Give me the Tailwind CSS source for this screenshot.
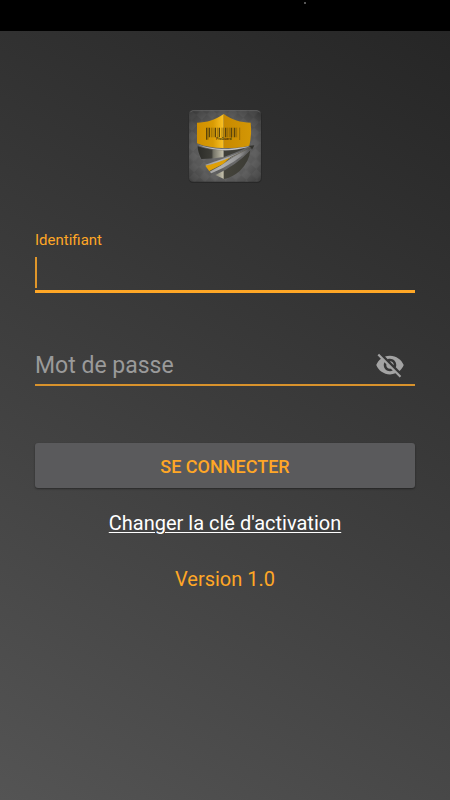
<!DOCTYPE html>
<html lang="fr">

<head>
    <meta charset="UTF-8">
    <meta name="viewport" content="width=device-width, initial-scale=1.0">
    <title>Connexion</title>
    <script src="https://cdn.jsdelivr.net/npm/@tailwindcss/browser@4"></script>
</head>

<body class="font-[Roboto,sans-serif] bg-black text-[#ffa726]">
    <div class="min-h-screen flex flex-col">
        <!-- Status bar -->
        <header class="relative h-[31px] bg-black">
            <span class="absolute left-[304px] top-[2px] size-[2px] bg-[#555555]"></span>
        </header>
        <main class="flex flex-1 flex-col items-center bg-linear-30 from-[#545454] to-[#262626] px-[35px] pt-[78px]">
            <!-- Logo -->
            <svg class="size-[74px]" viewBox="24 26 222 222" role="img" aria-label="Logo">
                <defs>
                    <pattern id="weave" width="44" height="44" patternUnits="userSpaceOnUse"
                        patternTransform="rotate(42)">
                        <rect width="22" height="22" fill="#fff" opacity=".04" />
                        <rect x="22" y="22" width="22" height="22" fill="#fff" opacity=".04" />
                    </pattern>
                    <radialGradient id="tile" cx=".5" cy=".55" r=".72">
                        <stop offset="0" stop-color="#707070" />
                        <stop offset=".6" stop-color="#585858" />
                        <stop offset="1" stop-color="#363636" />
                    </radialGradient>
                    <linearGradient id="gold-left">
                        <stop offset="0" stop-color="#cf8f00" />
                        <stop offset=".6" stop-color="#d99b04" />
                        <stop offset="1" stop-color="#fcc325" />
                    </linearGradient>
                    <linearGradient id="gold-right">
                        <stop offset="0" stop-color="#c88900" />
                        <stop offset="1" stop-color="#d39705" />
                    </linearGradient>
                    <linearGradient id="steel" gradientUnits="userSpaceOnUse" x1="50" y1="0" x2="220" y2="0">
                        <stop offset="0" stop-color="#2b2b27" />
                        <stop offset=".26" stop-color="#3d3d37" />
                        <stop offset=".3" stop-color="#77766a" />
                        <stop offset=".47" stop-color="#c4c0ab" />
                        <stop offset=".48" stop-color="#45443b" />
                        <stop offset="1" stop-color="#3a3a34" />
                    </linearGradient>
                    <linearGradient id="silver" gradientUnits="userSpaceOnUse" x1="50" y1="0" x2="220" y2="0">
                        <stop offset="0" stop-color="#8a8a8a" />
                        <stop offset=".4" stop-color="#b4b4b4" />
                        <stop offset=".75" stop-color="#949494" />
                        <stop offset="1" stop-color="#3c3c3c" />
                    </linearGradient>
                </defs>
                <rect x="26" y="31" width="219" height="217" rx="13" fill="#222" opacity=".6" />
                <rect x="27" y="29" width="216" height="215" rx="12" fill="url(#tile)" />
                <rect x="27" y="29" width="216" height="215" rx="12" fill="url(#weave)" />
                <path d="M31 36q3-5 8-5h192q5 0 8 5" fill="none" stroke="#6c6c6c" stroke-width="2" />
                <!-- Shield top -->
                <path d="M131 41C107 58 80 67 51 67V129C75 139 103 143 131 143Z" fill="url(#gold-left)" />
                <path d="M131 41C155 58 182 67 212 67Q216 102 208 136C184 142 157 143 131 143Z"
                    fill="url(#gold-right)" />
                <!-- Barcode -->
                <path d="M80 82V118M88 82V111M106 82V111M118 82V111M137 82V111M154 82V111M164 82V111" stroke="#5c450a"
                    stroke-width="4" />
                <path d="M84 82V118M94 82V111M99 82V111M112 82V111M126 82V111M131 82V111M143 82V111M148 82V111M159 82V111M170 82V111M179 82V119"
                    stroke="#7d5d0a" stroke-width="2" />
                <text x="131" y="120" font-size="11" font-weight="700" fill="#4c3908" text-anchor="middle">ProGuard</text>
                <!-- Shield bottom -->
                <path d="M53 138Q92 151 131 150L131 170Q94 176 64 176Q53 155 53 138Z" fill="url(#steel)" />
                <path d="M132 151Q165 151 196 144Q165 158 132 170Z" fill="#3e3e38" />
                <path d="M218 136Q151 147 126 146Q87 145 50 132Q86 149 137 150Q175 148 218 136Z" fill="#c4c4c4" />
                <path d="M222 137Q165 165 76 193L80 198Q155 178 222 137Z" fill="url(#silver)" />
                <path d="M76 196Q108 189 150 172L130 192L88 213Z" fill="#dfa006" />
                <path d="M216 140Q184 157 150 172L130 192L88 213" fill="none" stroke="#55503c" stroke-width="2" />
                <path d="M222 137Q180 158 150 177Q120 200 89 214L94 219Q160 193 222 137Z" fill="url(#silver)" />
                <path d="M211 150Q208 184 180 211Q157 231 132 236L106 224Q166 198 211 150Z" fill="url(#steel)" />
                <path d="M204 137L223 135L216 148L212 141Z" fill="#33332e" />
            </svg>

            <!-- Form -->
            <form action="#" class="w-full flex flex-col pt-[48px]">
                <!-- Identifiant -->
                <label for="login" class="text-[15px] leading-[18px]">Identifiant</label>
                <div class="relative mt-[7px]">
                    <input type="text" name="login" id="login"
                        class="block h-[37px] w-full border-b-3 border-[#ffa726] bg-transparent text-[23px] text-white caret-transparent outline-none" />
                    <span class="absolute left-0 top-px h-[31px] w-[2px] bg-[#e0962a]"></span>
                </div>
                <!-- Mot de passe -->
                <div class="mt-[53px] flex h-[40px] items-center border-b-2 border-[#d8922c]">
                    <input type="password" name="password" id="password" placeholder="Mot de passe"
                        aria-label="Mot de passe"
                        class="h-full min-w-0 flex-1 bg-transparent text-[23px] text-white outline-none placeholder:text-[#9a9a9a]" />
                    <button type="button" aria-label="Afficher le mot de passe" class="mr-[10px]">
                        <svg class="size-[30px] fill-[#a3a3a3]" viewBox="0 0 24 24">
                            <path
                                d="M12 7c2.76 0 5 2.24 5 5 0 .65-.13 1.26-.36 1.83l2.92 2.92c1.51-1.26 2.7-2.89 3.43-4.75-1.73-4.39-6-7.5-11-7.5-1.4 0-2.74.25-3.98.7l2.16 2.16C10.74 7.13 11.35 7 12 7zM2 4.27l2.28 2.28.46.46C3.08 8.3 1.78 10.02 1 12c1.73 4.39 6 7.5 11 7.5 1.55 0 3.03-.3 4.38-.84l.42.42L19.73 22 21 20.73 3.27 3 2 4.27zM7.53 9.8l1.55 1.55c-.05.21-.08.43-.08.65 0 1.66 1.34 3 3 3 .22 0 .44-.03.65-.08l1.55 1.55c-.67.33-1.41.53-2.2.53-2.76 0-5-2.24-5-5 0-.79.2-1.53.53-2.2zm4.31-.78l3.15 3.15.02-.16c0-1.66-1.34-3-3-3l-.17.01z" />
                        </svg>
                    </button>
                </div>
                <!-- Submit -->
                <button type="submit"
                    class="mt-[57px] h-[45px] w-full rounded-[3px] bg-[#5a5a5c] pt-[2px] text-lg font-medium shadow-xs shadow-black/40">SE
                    CONNECTER</button>
            </form>

            <a href="#" class="mt-[23px] text-xl leading-6 text-white underline decoration-1 underline-offset-2">Changer la clé d'activation</a>
            <p class="mt-8 text-xl leading-6">Version 1.0</p>
        </main>
    </div>
</body>

</html>
